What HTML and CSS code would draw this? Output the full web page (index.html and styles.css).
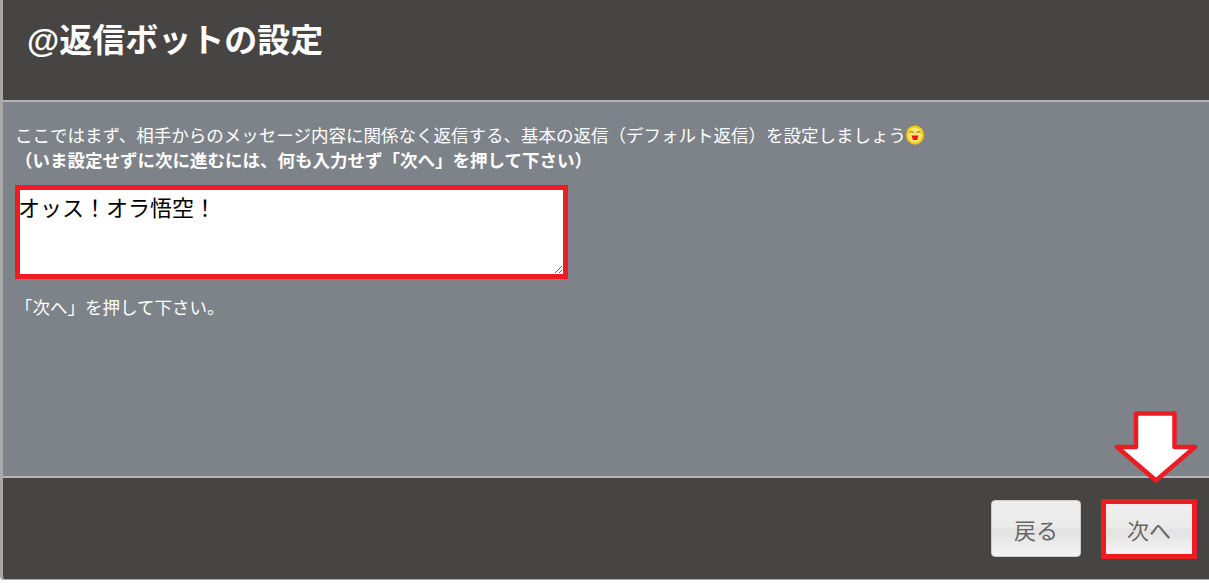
FILE: index.html
```html
<!DOCTYPE html>
<html lang="ja">
<head>
    <meta charset="UTF-8">
    <title>@返信ボットの設定</title>
    <link rel="stylesheet" href="styles.css">
</head>
<body>
    <div class="dialog">
        <div class="dialog-header">
            <h1>@返信ボットの設定</h1>
        </div>
        <div class="dialog-body">
            <p class="lead">ここではまず、相手からのメッセージ内容に関係なく返信する、基本の返信（デフォルト返信）を設定しましょう<svg class="smiley" viewBox="0 0 18 20" width="18" height="20"><ellipse cx="9" cy="10" rx="9" ry="9.500" fill="#ffc800"/><ellipse cx="9" cy="10" rx="7" ry="7.500" fill="#ffe66e"/><path d="M3.500 8l2-2 2 2M10.500 8l2-2 2 2" fill="none" stroke="#5a6428" stroke-width="1"/><path d="M5.500 10.500h7l-1.500 4.500h-4z" fill="#f0141e"/></svg><br><b>（いま設定せずに次に進むには、何も入力せず「次へ」を押して下さい）</b></p>
            <textarea class="reply-box">オッス！オラ悟空！</textarea>
            <p class="hint">「次へ」を押して下さい。</p>
        </div>
        <div class="dialog-footer">
            <button class="btn">戻る</button>
            <button class="btn btn-next">次へ</button>
            <!-- annotation arrow over the next button -->
            <svg class="arrow" viewBox="0 0 84 74" width="84" height="74">
                <path d="M22 2.500H60.500V36H81L42 69.500L3 36H22Z" fill="#fff" stroke="#ed1c24" stroke-width="4.500" stroke-linejoin="round"/>
            </svg>
        </div>
    </div>
</body>
</html>
```

FILE: styles.css
```css
* {
    box-sizing: border-box;
}

html, body {
    height: 100%;
}

body {
    margin: 0;
    background: #fff;
    font-family: "Liberation Sans", "Noto Sans CJK JP", sans-serif;
    overflow: hidden;
}

.dialog {
    height: 580px;
    border-left: 3px solid #a8a8a8;
    border-bottom: 1px solid #a8a8a8;
    border-bottom-left-radius: 4px;
    display: flex;
    flex-direction: column;
    overflow: hidden;
}

.dialog-header {
    height: 102px;
    padding: 21px 24px 0;
    background: #474543;
    border-bottom: 2px solid #b4b4b4;
}

.dialog-header h1 {
    margin: 0;
    color: #fff;
    font-size: 33px;
    line-height: 40px;
    font-weight: 700;
}

.dialog-body {
    flex: 1;
    padding: 22px 12px 0;
    background: #7e8389;
    color: #fff;
}

.lead {
    margin: 0;
    font-size: 17.500px;
    line-height: 25px;
}

.smiley {
    vertical-align: -3px;
}

.reply-box {
    display: block;
    width: 553px;
    height: 94px;
    margin-top: 11px;
    padding: 4px 0 0 0;
    border: 5px solid #ed1c24;
    border-radius: 0;
    font-family: inherit;
    font-size: 22px;
    line-height: 30px;
    text-indent: -2px;
    color: #000;
    background: #fff;
    outline: none;
}

.hint {
    margin: 17px 0 0;
    font-size: 17.500px;
    line-height: 24px;
}

.dialog-footer {
    position: relative;
    height: 103px;
    padding: 22px 12px 0 0;
    background: #474543;
    border-top: 2px solid #b4b4b4;
    display: flex;
    justify-content: flex-end;
    align-items: flex-start;
    gap: 20px;
}

.btn {
    width: 90px;
    height: 57px;
    padding: 0;
    border: 1px solid #ccc;
    border-radius: 4px;
    background: linear-gradient(#ededed 0%, #ebebeb 46%, #e2e2e2 52%, #f3f3f3 100%);
    color: #666;
    font-family: inherit;
    font-size: 22px;
}

.btn-next {
    width: 96px;
    height: 60px;
    margin-top: -1px;
    border: 5px solid #ed1c24;
    border-radius: 0;
}

.arrow {
    position: absolute;
    right: 11px;
    top: -67px;
}
```
